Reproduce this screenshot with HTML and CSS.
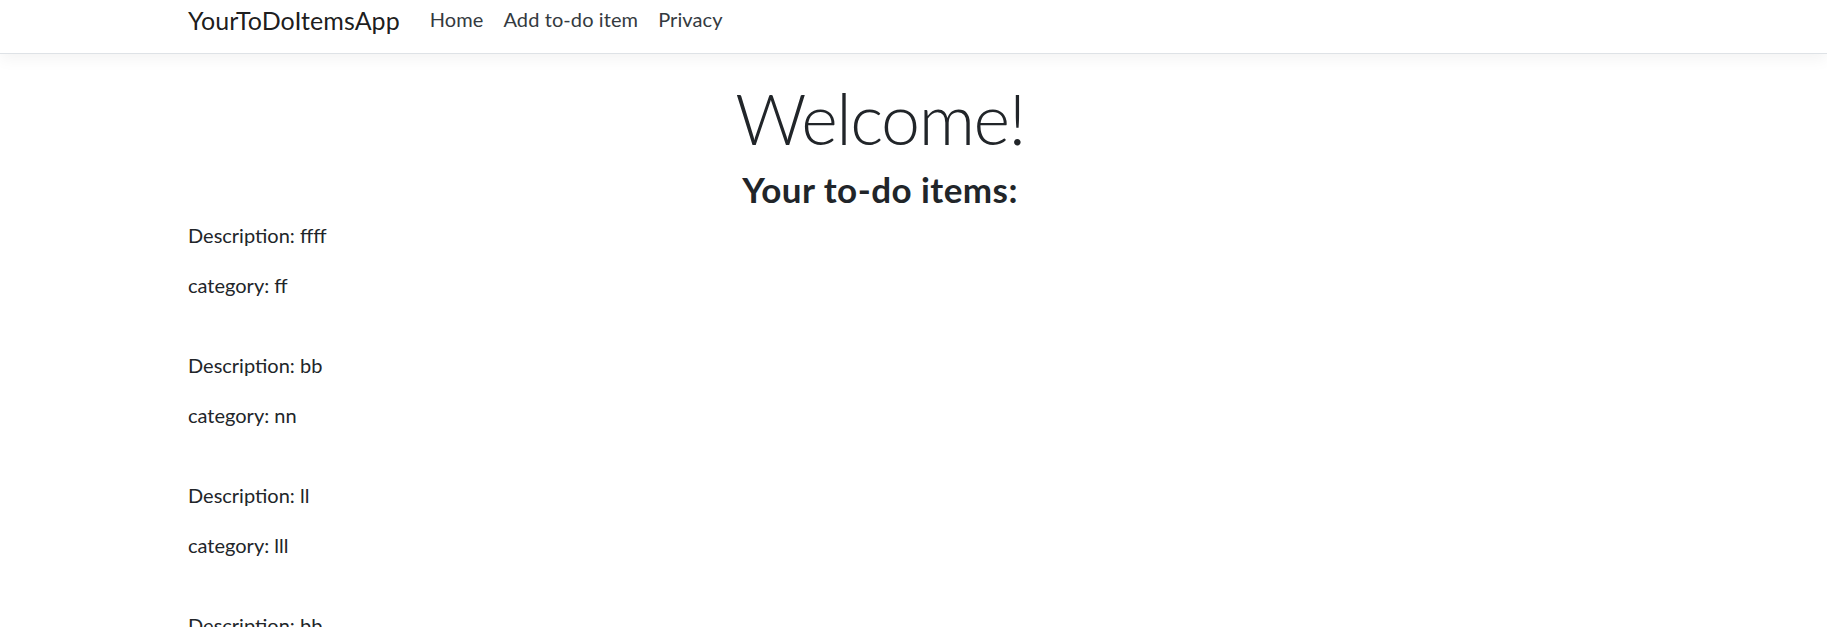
FILE: index.html
```html
<!DOCTYPE html>
<html lang="en">
<head>
<meta charset="utf-8">
<title>Home Page - YourToDoItemsApp</title>
<link rel="stylesheet" href="styles.css">
</head>
<body>
<header class="site-header">
  <nav class="navbar">
    <div class="container nav-inner">
      <a class="brand" href="#">YourToDoItemsApp</a>
      <ul class="nav-list">
        <li><a class="nav-link" href="#">Home</a></li>
        <li><a class="nav-link" href="#">Add to-do item</a></li>
        <li><a class="nav-link" href="#">Privacy</a></li>
      </ul>
    </div>
  </nav>
</header>
<div class="container">
  <main class="main">
    <div class="text-center">
      <h1 class="display">Welcome!</h1>
      <h3 class="subtitle">Your to-do items:</h3>
    </div>
    <div class="todo">
      <p>Description: ffff</p>
      <p>category: ff</p>
    </div>
    <div class="todo">
      <p>Description: bb</p>
      <p>category: nn</p>
    </div>
    <div class="todo">
      <p>Description: ll</p>
      <p>category: lll</p>
    </div>
    <div class="todo">
      <p>Description: bb</p>
      <p>category: bb</p>
    </div>
  </main>
</div>
</body>
</html>
```
FILE: styles.css
```css
html, body {
  margin: 0;
  padding: 0;
}
body {
  font-family: "Lato", "Open Sans", sans-serif;
  font-size: 20px;
  line-height: 30px;
  color: #212529;
  background: #ffffff;
}
.container {
  width: 1384px;
  margin-left: 188px;
  box-sizing: border-box;
}
.site-header {
  margin-bottom: 22px;
}
.navbar {
  height: 53px;
  background: #ffffff;
  border-bottom: 1px solid #dee2e6;
  box-shadow: 0 5px 15px rgba(0, 0, 0, 0.05);
}
.nav-inner {
  display: flex;
  align-items: flex-start;
}
.brand {
  font-size: 25px;
  line-height: 30px;
  padding-top: 5px;
  margin-right: 20px;
  letter-spacing: 0.05px;
  color: rgba(0, 0, 0, 0.9);
  text-decoration: none;
  white-space: nowrap;
}
.nav-list {
  display: flex;
  list-style: none;
  margin: 0;
  padding: 4px 0 0;
}
.nav-link {
  display: block;
  padding: 0 10px;
  font-size: 20px;
  line-height: 30px;
  letter-spacing: 0.1px;
  color: #343a40;
  text-decoration: none;
}
.main {
  padding-bottom: 20px;
}
.text-center {
  text-align: center;
}
.display {
  margin: 0 0 8px;
  font-size: 70px;
  line-height: 84px;
  font-weight: 300;
  letter-spacing: -1.5px;
}
.subtitle {
  margin: 0 0 10px;
  font-size: 35px;
  line-height: 42px;
  font-weight: 700;
  letter-spacing: 0.45px;
}
.todo {
  padding-bottom: 30px;
}
.todo p {
  margin: 0 0 20px;
}
```
